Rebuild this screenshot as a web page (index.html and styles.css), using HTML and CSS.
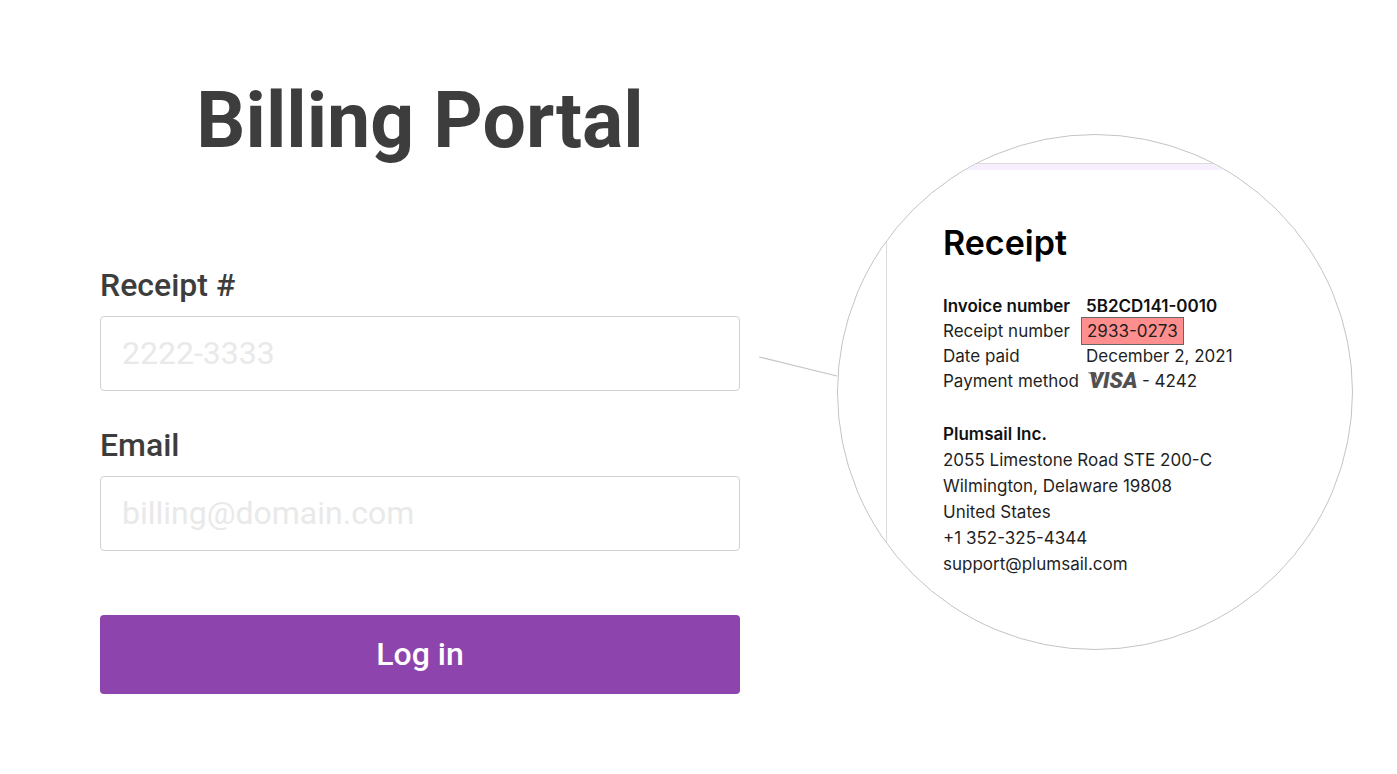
FILE: index.html
```html
<!DOCTYPE html>
<html lang="en">
<head>
<meta charset="utf-8">
<meta name="viewport" content="width=device-width, initial-scale=1">
<title>Billing Portal</title>
<link rel="stylesheet" href="styles.css">
</head>
<body>
<main class="portal">
  <form class="login">
    <h1 class="login-title">Billing Portal</h1>
    <div class="field">
      <label class="field-label" for="receipt">Receipt #</label>
      <input class="field-input" id="receipt" type="text" placeholder="2222-3333">
    </div>
    <div class="field">
      <label class="field-label" for="email">Email</label>
      <input class="field-input" id="email" type="email" placeholder="billing@domain.com">
    </div>
    <button class="login-button" type="submit">Log in</button>
  </form>
  <aside class="hint">
    <svg class="hint-line" width="78" height="21" viewBox="0 0 78 21" aria-hidden="true">
      <path d="M0 1 78 20" fill="none" stroke="#c4c4c4" stroke-width="1.2"/>
    </svg>
    <div class="lens">
      <div class="paper">
        <h2 class="paper-title">Receipt</h2>
        <dl class="details">
          <dt class="strong">Invoice number</dt><dd class="strong">5B2CD141-0010</dd>
          <dt>Receipt number</dt><dd><mark class="highlight">2933-0273</mark></dd>
          <dt>Date paid</dt><dd>December 2, 2021</dd>
          <dt>Payment method</dt>
          <dd class="card">
            <svg class="visa" width="52" height="29" viewBox="0 0 52 29" role="img" aria-label="Visa">
              <path d="M2 5.400h8l2 12C11 10 7 7 2 6z" fill="#505153"/>
              <text class="visa-text" x="3" y="21">VISA</text>
            </svg>
            <span>- 4242</span>
          </dd>
        </dl>
        <address class="company">
          <strong class="strong">Plumsail Inc.</strong><br>
          2055 Limestone Road STE 200-C<br>
          Wilmington, Delaware 19808<br>
          United States<br>
          +1 352-325-4344<br>
          support@plumsail.com
        </address>
      </div>
    </div>
  </aside>
</main>
</body>
</html>
```
FILE: styles.css
```css
* {
  box-sizing: border-box;
}

body {
  margin: 0;
  background: #fff;
  color: #3d3d3d;
  font-family: Roboto, sans-serif;
}

.portal {
  display: flex;
  align-items: flex-start;
  gap: 19px;
  padding: 76px 44px 80px 100px;
}

.login {
  flex: 1;
  min-width: 0;
  display: flex;
  flex-direction: column;
}

.login-title {
  margin: 0 0 98px;
  font-size: 77px;
  line-height: 90px;
  font-weight: 700;
  text-align: center;
}

.field {
  display: flex;
  flex-direction: column;
  gap: 10px;
  margin-bottom: 33px;
}

.field-label {
  font-size: 32px;
  line-height: 42px;
  font-weight: 500;
}

.field-input {
  width: 100%;
  height: 75px;
  padding: 0 21px 1px;
  border: 1px solid #d1d1d8;
  border-radius: 4px;
  background: #fff;
  color: #3d3d3d;
  font-family: inherit;
  font-size: 32px;
}

.field-input::placeholder {
  color: #e9e9e9;
  opacity: 1;
}

.login-button {
  height: 79px;
  margin-top: 31px;
  padding: 0 0 2px;
  border: 0;
  border-radius: 4px;
  background: #8e44ad;
  color: #fff;
  font-family: inherit;
  font-size: 32px;
  font-weight: 500;
}

.hint {
  display: flex;
  align-items: flex-start;
  padding-top: 58px;
}

.hint-line {
  margin-top: 222px;
}

.lens {
  width: 516px;
  aspect-ratio: 1;
  overflow: hidden;
  border: 1px solid #c4c4c4;
  border-radius: 50%;
}

.paper {
  min-height: 100%;
  margin: 28px 0 0 48px;
  padding: 54px 0 0 56px;
  border-top: 1px solid #dcdcdc;
  border-left: 1px solid #dcdcdc;
  background: linear-gradient(#f7effd, #f7effd) top / 100% 6px no-repeat;
  color: #1f1f1f;
  font-family: Inter, sans-serif;
  font-size: 17px;
}

.paper-title {
  margin: 0 0 26px;
  color: #000;
  font-size: 34px;
  line-height: 50px;
  font-weight: 600;
}

.details {
  display: grid;
  grid-template-columns: 143px 1fr;
  grid-auto-rows: 25px;
  margin: 0 0 27px;
  line-height: 25px;
  white-space: nowrap;
}

.details dd {
  margin: 0;
}

.strong {
  color: #111;
  font-weight: 600;
}

.highlight {
  margin-left: -5px;
  padding: 3px 5px;
  border: 1px solid #666;
  background: #ff8f8f;
  color: #1f1f1f;
}

.card {
  display: flex;
  align-items: flex-start;
  gap: 4px;
}

.visa {
  margin-top: -2px;
}

.visa-text {
  fill: #505153;
  font-family: Roboto, sans-serif;
  font-size: 22px;
  font-style: italic;
  font-weight: 900;
}

.company {
  line-height: 26px;
  font-style: normal;
  white-space: nowrap;
}
```
